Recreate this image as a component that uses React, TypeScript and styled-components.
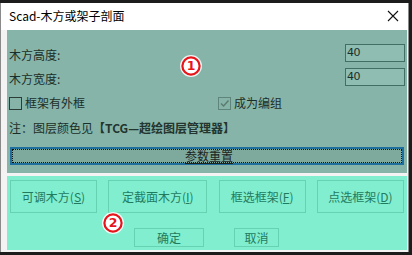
import React from "react";
import styled, { createGlobalStyle } from "styled-components";

const Global = createGlobalStyle`
  html, body { margin: 0; padding: 0; background: #1c1c1c; }
  body { font-family: "Noto Sans CJK SC", "Noto Sans", sans-serif; }
  #root { width: 412px; height: 255px; overflow: hidden; }
`;

const Window = styled.div`
  position: relative;
  margin-top: 3px;
  width: 409px;
  height: 249px;
  border-left: 1px solid #8a8a8a;
  border-right: 1px solid #8a8a8a;
  background: #f3f3f3;
  display: flex;
  flex-direction: column;
  box-sizing: border-box;
  font-size: 12px;
`;

const TitleBar = styled.div`
  height: 27px;
  background: #ffffff;
  display: flex;
  align-items: center;
  justify-content: space-between;
  padding: 0 8px 0 8px;
  color: #000;
  font-size: 12px;
`;

const TitleText = styled.span`
  line-height: 16px;
  margin-top: -1px;
`;

const CloseIcon = styled.svg`
  width: 12px;
  height: 12px;
  margin-right: 1px;
  margin-top: -2px;
`;

const Body = styled.div`
  padding: 0 1px 0 6px;
  display: flex;
  flex-direction: column;
`;

const ParamPanel = styled.div`
  height: 143px;
  background: #87b4a8;
  padding: 14px 2px 0 2px;
  box-sizing: border-box;
  display: flex;
  flex-direction: column;
  color: #1b2f29;
`;

const FieldRow = styled.div<{ $mt: number }>`
  height: 18px;
  margin-top: ${(p) => p.$mt}px;
  display: flex;
  align-items: center;
  justify-content: space-between;
`;

const Label = styled.span`
  line-height: 16px;
  margin-top: 4px;
`;

const NumInput = styled.div`
  width: 60px;
  height: 18px;
  box-sizing: border-box;
  border: 1px solid #426f63;
  background: #8fbdb1;
  color: #1b2f29;
  font-family: "DejaVu Sans", sans-serif;
  font-size: 11px;
  line-height: 16px;
  padding-left: 1px;
  letter-spacing: -0.5px;
`;

const CheckRow = styled.div`
  height: 16px;
  margin-top: 9px;
  display: grid;
  grid-template-columns: 208px 1fr;
  align-items: center;
`;

const CheckItem = styled.label`
  display: flex;
  align-items: center;
  gap: 3px;
  line-height: 16px;
`;

const Box = styled.span<{ $checked?: boolean }>`
  width: 13px;
  height: 13px;
  box-sizing: border-box;
  border: 1px solid ${(p) => (p.$checked ? "#5f8479" : "#2a3d37")};
  display: inline-flex;
  align-items: center;
  justify-content: center;
  margin-left: ${(p) => (p.$checked ? "1px" : "0")};
`;

const Note = styled.div`
  height: 16px;
  margin-top: 9px;
  line-height: 16px;
`;

const Bold = styled.span`
  font-weight: 700;
  color: #22352f;
`;

const ResetButton = styled.div`
  height: 18px;
  margin: 11px 1px 0 1px;
  box-sizing: border-box;
  border: 2px solid #1f6f9e;
  background: #7eaa9e;
  position: relative;
  display: flex;
  align-items: center;
  justify-content: center;
  color: #1b2622;
  &::after {
    content: "";
    position: absolute;
    inset: 0;
    border: 1px dotted #111;
  }
`;

const ResetText = styled.span`
  text-decoration: underline;
  text-underline-offset: 2px;
  line-height: 14px;
  margin-left: 4px;
`;

const Spacer = styled.div`
  height: 3px;
`;

const ActionPanel = styled.div`
  height: 74px;
  background: #81eecf;
  padding: 4px 3px 0 3px;
  box-sizing: border-box;
  display: flex;
  flex-direction: column;
`;

const ToolRow = styled.div`
  display: flex;
  justify-content: space-between;
`;

const GreenButton = styled.div<{ $w: number; $h: number }>`
  width: ${(p) => p.$w}px;
  height: ${(p) => p.$h}px;
  box-sizing: border-box;
  border: 1px solid #66d2b1;
  display: flex;
  align-items: center;
  justify-content: center;
  color: #1f7b60;
  font-size: 12px;
  line-height: 16px;
`;

const Key = styled.span`
  text-decoration: underline;
`;

const DialogRow = styled.div`
  margin-top: 15px;
  padding-left: 124px;
  display: flex;
  gap: 30px;
`;

const Marker = styled.svg<{ $x: number; $y: number }>`
  position: absolute;
  left: ${(p) => p.$x}px;
  top: ${(p) => p.$y}px;
  width: 24px;
  height: 24px;
`;

function Badge({ x, y, n }: { x: number; y: number; n: string }) {
  return (
    <Marker $x={x} $y={y} viewBox="0 0 24 24">
      <circle cx="12" cy="12" r="11" fill="#ffffff" opacity="0.85" />
      <circle cx="12" cy="12" r="8.6" fill="#ffffff" stroke="#e8141b" strokeWidth="2.2" />
      <text
        x="12"
        y="16.3"
        textAnchor="middle"
        fontFamily="DejaVu Sans, sans-serif"
        fontWeight="700"
        fontSize="12.5"
        fill="#e8141b"
      >
        {n}
      </text>
    </Marker>
  );
}

export default function App() {
  return (
    <>
      <Global />
      <Window>
        <TitleBar>
          <TitleText>Scad-木方或架子剖面</TitleText>
          <CloseIcon viewBox="0 0 12 12">
            <path d="M1 1 L11 11 M11 1 L1 11" stroke="#111" strokeWidth="1.1" fill="none" />
          </CloseIcon>
        </TitleBar>
        <Body>
          <ParamPanel>
            <FieldRow $mt={0}>
              <Label>木方高度:</Label>
              <NumInput>40</NumInput>
            </FieldRow>
            <FieldRow $mt={6}>
              <Label>木方宽度:</Label>
              <NumInput>40</NumInput>
            </FieldRow>
            <CheckRow>
              <CheckItem>
                <Box />
                框架有外框
              </CheckItem>
              <CheckItem>
                <Box $checked>
                  <svg width="11" height="11" viewBox="0 0 11 11">
                    <path d="M2 5.5 L4.5 8 L9.5 2.5" stroke="#5a7a70" strokeWidth="1.4" fill="none" />
                  </svg>
                </Box>
                成为编组
              </CheckItem>
            </CheckRow>
            <Note>
              注：图层颜色见<Bold>【TCG—超绘图层管理器】</Bold>
            </Note>
            <ResetButton>
              <ResetText>参数重置</ResetText>
            </ResetButton>
          </ParamPanel>
          <Spacer />
          <ActionPanel>
            <ToolRow>
              <GreenButton $w={87} $h={33}>
                可调木方(<Key>S</Key>)
              </GreenButton>
              <GreenButton $w={99} $h={33}>
                定截面木方(<Key>I</Key>)
              </GreenButton>
              <GreenButton $w={87} $h={33}>
                框选框架(<Key>F</Key>)
              </GreenButton>
              <GreenButton $w={87} $h={33}>
                点选框架(<Key>D</Key>)
              </GreenButton>
            </ToolRow>
            <DialogRow>
              <GreenButton $w={70} $h={19}>确定</GreenButton>
              <GreenButton $w={45} $h={19}>取消</GreenButton>
            </DialogRow>
          </ActionPanel>
        </Body>
        <Badge x={178} y={51} n="1" />
        <Badge x={100} y={208} n="2" />
      </Window>
    </>
  );
}
